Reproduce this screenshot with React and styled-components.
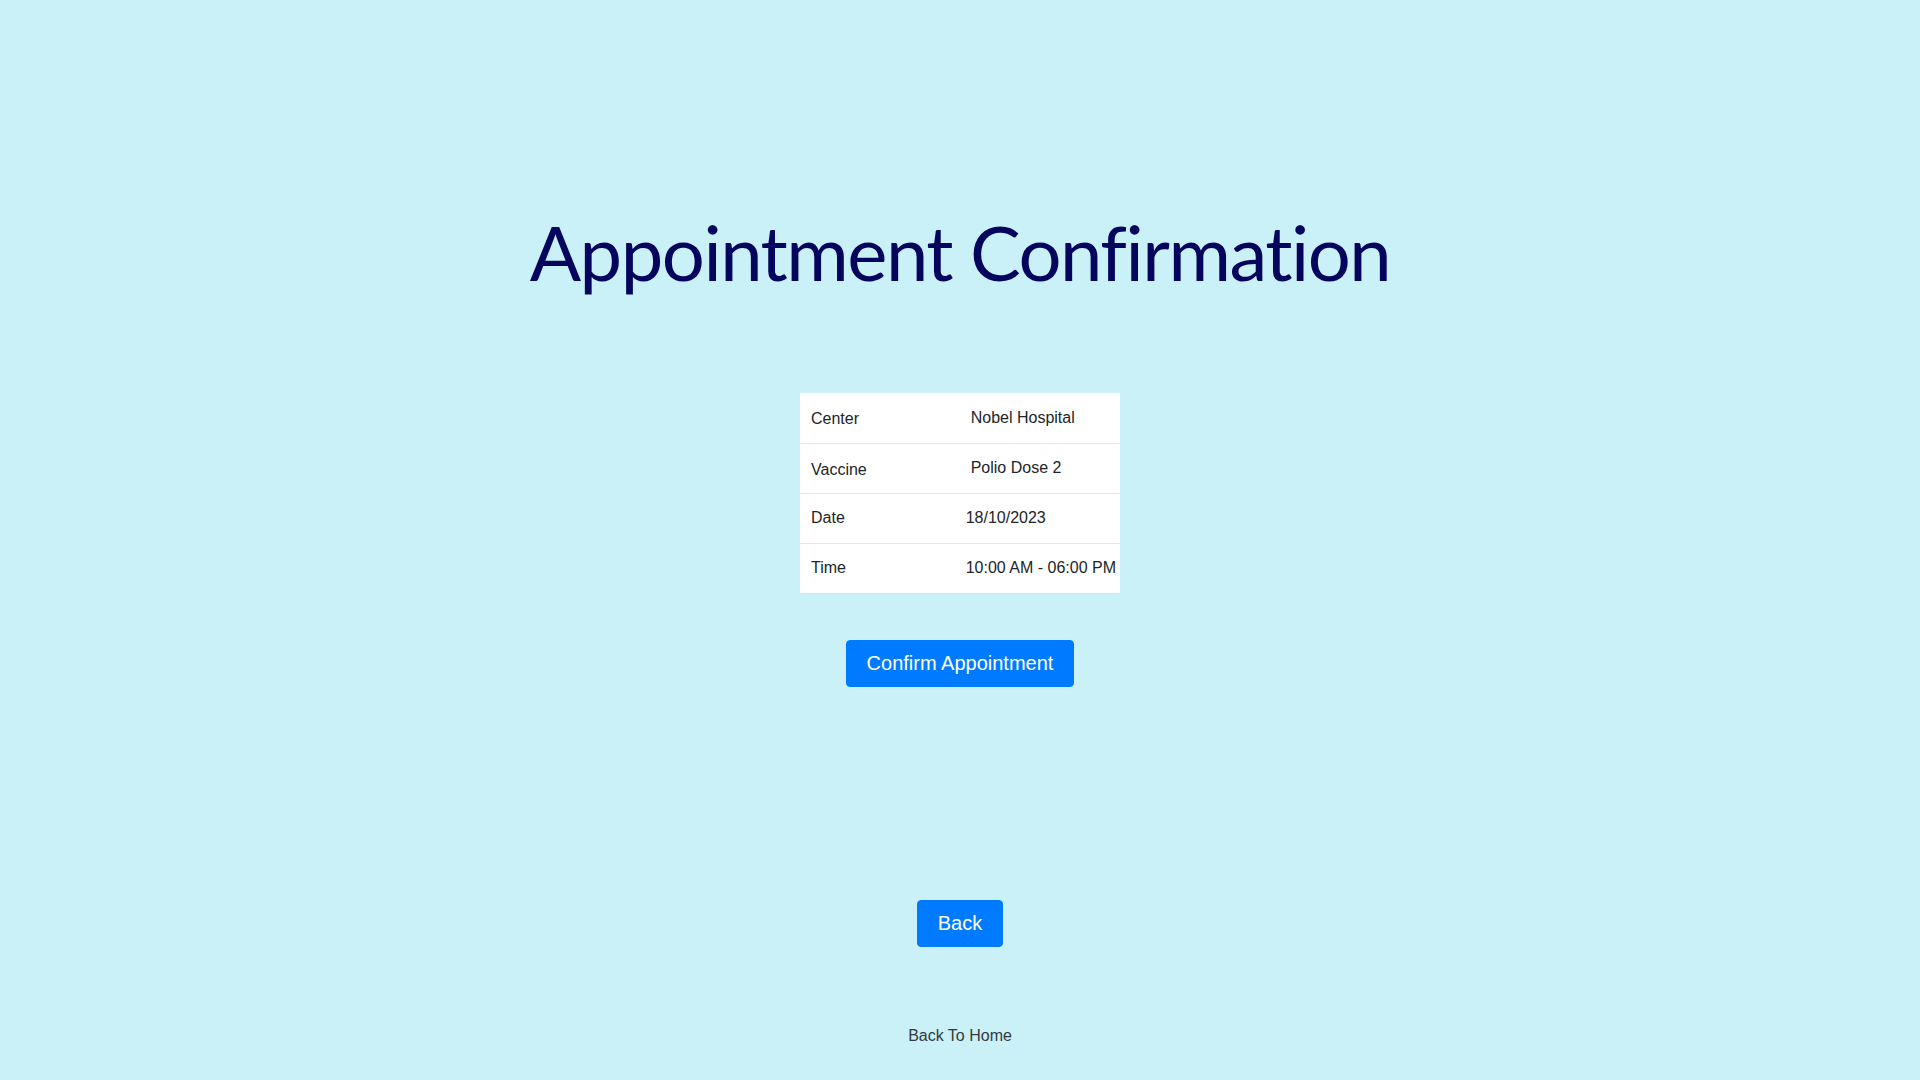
import React from 'react';
import styled, { createGlobalStyle } from "styled-components";

const GlobalStyle = createGlobalStyle`
	body {
		margin: 0;
		background: #caf0f8;
		font-family: "Liberation Sans", Arial, sans-serif;
	}
`

const Page = styled.div`
	min-height: 100vh;
	box-sizing: border-box;
	display: flex;
	flex-direction: column;
	align-items: center;
	padding-top: 204px;
`

const Title = styled.h1`
	margin: 0;
	font-family: Lato, "Open Sans", sans-serif;
	font-weight: 400;
	font-size: 76px;
	letter-spacing: -1.5px;
	font-variant-ligatures: none;
	line-height: 96px;
	color: #05055e;
`

const DetailTable = styled.table`
	margin-top: 93px;
	border-collapse: collapse;
	background: #fff;
	font-size: 16px;
	color: #212529;
	width: 320px;
`

const Row = styled.tr`
	height: 50px;
	border-bottom: 1px solid #e4e8ec;
	&:last-child {
		border-bottom: 1px solid #dde2e6;
	}
`

const Label = styled.td`
	width: 150px;
	padding: 0 0 0 11px;
	padding-top: ${props => props.$low ? '3px' : '0'};
`

const Value = styled.td`
	padding: 0 4px 0 ${props => props.$indent ? '10px' : '5px'};
	white-space: nowrap;
`

const Button = styled.button`
	background-color: #007bff;
	color: #fff;
	font-family: "Liberation Sans", Arial, sans-serif;
	font-size: 20px;
	line-height: 29px;
	padding: 8px 20px;
	border: 1px solid #007bff;
	border-radius: 4px;
	cursor: pointer;
	margin-top: ${props => props.$top}px;
`

const HomeLink = styled.a`
	margin-top: 77px;
	font-size: 16px;
	line-height: 24px;
	color: #343a40;
	text-decoration: none;
	cursor: pointer;
`

const rows = [
	{ label: 'Center', value: 'Nobel Hospital', indent: true, low: true },
	{ label: 'Vaccine', value: 'Polio Dose 2', indent: true, low: true },
	{ label: 'Date', value: '18/10/2023' },
	{ label: 'Time', value: '10:00 AM - 06:00 PM' },
]

const App = () => {
	return (
		<>
			<GlobalStyle />
			<Page>
				<Title>Appointment Confirmation</Title>
				<DetailTable>
					<tbody>
						{rows.map(r => (
							<Row key={r.label}>
								<Label $low={r.low}>{r.label}</Label>
								<Value $indent={r.indent}>{r.value}</Value>
							</Row>
						))}
					</tbody>
				</DetailTable>
				<Button $top={46}>Confirm Appointment</Button>
				<Button $top={213}>Back</Button>
				<HomeLink>Back To Home</HomeLink>
			</Page>
		</>
	)
}

export default App;
